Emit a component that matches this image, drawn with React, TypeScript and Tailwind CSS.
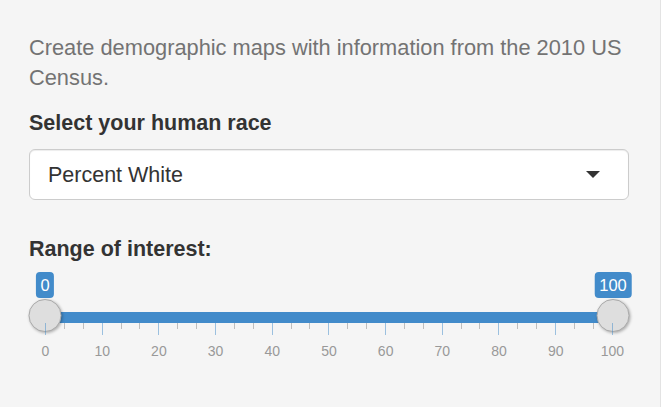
import React from 'react';

const majors = [0, 10, 20, 30, 40, 50, 60, 70, 80, 90, 100];

function Handle({ left }: { left: string }) {
  return (
    <div
      className="absolute top-0 h-[33px] w-[33px] -translate-x-1/2 rounded-full border border-[#aaa] bg-[#dedede] shadow-[1px_1px_3px_rgba(0,0,0,0.3)]"
      style={{ left }}
    />
  );
}

function Badge({ left, value }: { left: string; value: number }) {
  return (
    <div
      className="absolute top-0 h-[26px] -translate-x-1/2 rounded-[4px] bg-[#428bca] px-[4.5px] text-[16.5px] leading-[26px] text-white"
      style={{ left }}
    >
      {value}
    </div>
  );
}

function RangeSlider({ from, to }: { from: number; to: number }) {
  // 10 big steps, 2 small ticks between each
  const ticks: boolean[] = [];
  for (let i = 0; i <= 30; i++) ticks.push(i % 3 === 0);

  return (
    <div className="w-[600px] px-[16px]">
      <div className="flex w-[568px] flex-col">
        <div className="relative h-[27px]">
          <Badge left={`${from}%`} value={from} />
          <Badge left={`${to}%`} value={to} />
        </div>

        <div className="relative h-[24px] pt-[13px]">
          <div
            className="h-[11px] bg-[#428bca]"
            style={{ marginLeft: `${from}%`, width: `${to - from}%` }}
          />
          <Handle left={`${from}%`} />
          <Handle left={`${to}%`} />
        </div>

        <div className="flex items-start justify-between">
          {ticks.map((big, i) =>
            big ? (
              <div key={i} className="h-[12px] w-px bg-[#428bca] opacity-50" />
            ) : (
              <div key={i} className="h-[6px] w-px bg-[#999] opacity-60" />
            )
          )}
        </div>

        <div className="mt-[8px] flex justify-between">
          {majors.map((m) => (
            <div key={m} className="flex w-px justify-center">
              <span className="text-[14px] leading-[16px] text-[#999]">{m}</span>
            </div>
          ))}
        </div>
      </div>
    </div>
  );
}

export default function App() {
  return (
    <div className="flex h-[407px] w-[666px] bg-white font-['Liberation_Sans',Arial,sans-serif]">
      <div className="h-full w-[661px] border-r border-[#e3e3e3] bg-[#f5f5f5] pl-[29px] pt-[33px]">
        <p className="mb-[15px] w-[600px] text-[21.8px] leading-[30px] text-[#737373]">
          Create demographic maps with information from the 2010 US Census.
        </p>

        <label className="mb-[11px] block text-[21.5px] font-bold leading-[30px] text-[#333]">
          Select your human race
        </label>
        <div className="flex h-[51px] w-[600px] items-center justify-between rounded-[6px] border border-[#ccc] bg-white pl-[18px] pr-[28px] shadow-[inset_0_1px_1px_rgba(0,0,0,0.075)]">
          <span className="text-[21.5px] leading-[30px] text-[#333]">Percent White</span>
          <span className="h-0 w-0 border-x-[7px] border-t-[7px] border-x-transparent border-t-[#333]" />
        </div>

        <label className="mb-[8px] mt-[34px] block text-[21.5px] font-bold leading-[30px] text-[#333]">
          Range of interest:
        </label>
        <RangeSlider from={0} to={100} />
      </div>
    </div>
  );
}
